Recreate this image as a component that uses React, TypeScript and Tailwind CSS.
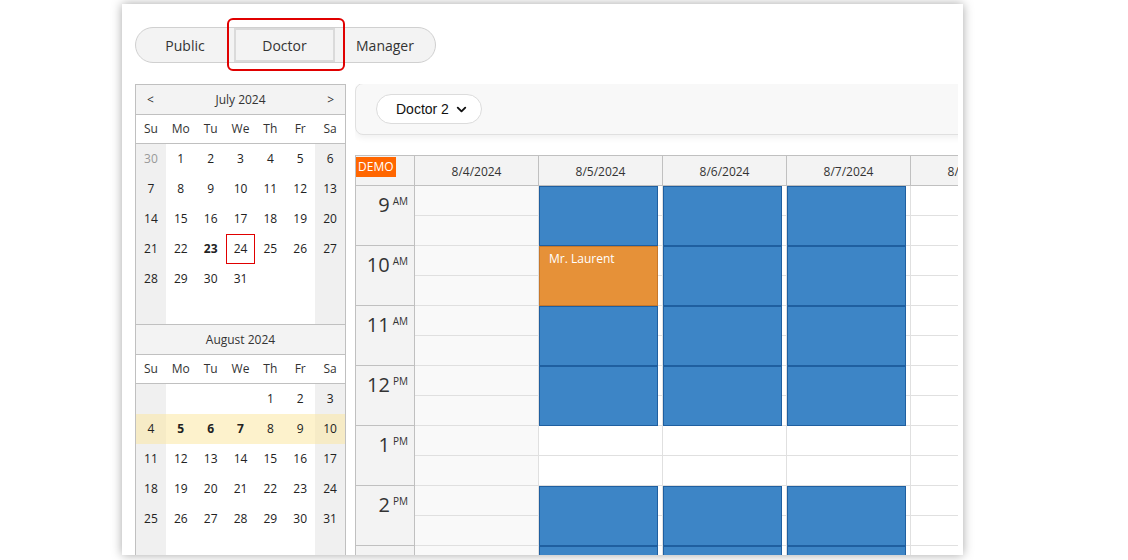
import React from 'react';
import { ChevronDown } from 'lucide-react';

const font = { fontFamily: '"Open Sans", "Noto Sans", sans-serif' };

type MonthDef = {
  title: string;
  nav?: boolean;
  rows: (number | null)[][];
  prevDays?: number[]; // values in first row that belong to previous month
  bold?: number[];
  today?: number;
  highlightRow?: number;
};

const july: MonthDef = {
  title: 'July 2024',
  nav: true,
  rows: [
    [30, 1, 2, 3, 4, 5, 6],
    [7, 8, 9, 10, 11, 12, 13],
    [14, 15, 16, 17, 18, 19, 20],
    [21, 22, 23, 24, 25, 26, 27],
    [28, 29, 30, 31, null, null, null],
    [null, null, null, null, null, null, null],
  ],
  prevDays: [30],
  bold: [23],
  today: 24,
};

const august: MonthDef = {
  title: 'August 2024',
  rows: [
    [null, null, null, null, 1, 2, 3],
    [4, 5, 6, 7, 8, 9, 10],
    [11, 12, 13, 14, 15, 16, 17],
    [18, 19, 20, 21, 22, 23, 24],
    [25, 26, 27, 28, 29, 30, 31],
    [null, null, null, null, null, null, null],
  ],
  bold: [5, 6, 7],
  highlightRow: 1,
};

const dayNames = ['Su', 'Mo', 'Tu', 'We', 'Th', 'Fr', 'Sa'];

const Month: React.FC<{ m: MonthDef }> = ({ m }) => (
  <div className="border-t border-[#c0c0c0]">
    <div className="h-[30px] bg-[#f3f3f3] flex items-center justify-between px-[11px] text-[12px] text-[#333] border-b border-[#c0c0c0]">
      <span className="w-[8px]">{m.nav ? '<' : ''}</span>
      <span>{m.title}</span>
      <span className="w-[8px] text-right">{m.nav ? '>' : ''}</span>
    </div>
    <div className="grid grid-cols-7 h-[29px] items-center text-[12px] text-[#333] bg-white border-b border-[#c0c0c0]">
      {dayNames.map(d => (
        <div key={d} className="text-center">{d}</div>
      ))}
    </div>
    {m.rows.map((row, ri) => (
      <div key={ri} className="grid grid-cols-7">
        {row.map((d, ci) => {
          const weekend = ci === 0 || ci === 6;
          const hl = m.highlightRow === ri;
          const bg = hl
            ? weekend ? 'bg-[#f6ebc6]' : 'bg-[#fdf2cc]'
            : weekend ? 'bg-[#f0f0f0]' : 'bg-white';
          const prev = ri === 0 && d !== null && m.prevDays?.includes(d);
          const isBold = d !== null && !prev && m.bold?.includes(d);
          const isToday = d !== null && d === m.today;
          return (
            <div
              key={ci}
              className={`h-[30px] flex items-center justify-center text-[12px] ${bg} ${prev ? 'text-[#999]' : 'text-[#222]'} ${isBold ? 'font-bold' : ''} ${isToday ? 'border border-[#e00000]' : ''}`}
            >
              {d ?? ''}
            </div>
          );
        })}
      </div>
    ))}
  </div>
);

const days = ['8/4/2024', '8/5/2024', '8/6/2024', '8/7/2024', '8/8/2024'];
const hours = [
  { h: '9', p: 'AM' },
  { h: '10', p: 'AM' },
  { h: '11', p: 'AM' },
  { h: '12', p: 'PM' },
  { h: '1', p: 'PM' },
  { h: '2', p: 'PM' },
  { h: '', p: '' },
];

type Ev = { slot: number; text?: string; orange?: boolean };
const events: Record<number, Ev[]> = {
  1: [{ slot: 0 }, { slot: 1, text: 'Mr. Laurent', orange: true }, { slot: 2 }, { slot: 3 }, { slot: 5 }, { slot: 6 }],
  2: [{ slot: 0 }, { slot: 1 }, { slot: 2 }, { slot: 3 }, { slot: 5 }, { slot: 6 }],
  3: [{ slot: 0 }, { slot: 1 }, { slot: 2 }, { slot: 3 }, { slot: 5 }, { slot: 6 }],
};

const Scheduler: React.FC = () => (
  <div className="border-l border-t border-[#c0c0c0] w-max">
    {/* header */}
    <div className="flex h-[30px] border-b border-[#c0c0c0] bg-[#f3f3f3]">
      <div className="w-[59px] border-r border-[#c0c0c0] relative">
        <span className="absolute left-[0px] top-[1px] bg-[#ff6600] text-white text-[12px] leading-[20px] px-[2px]">DEMO</span>
      </div>
      {days.map(d => (
        <div key={d} className="w-[124px] border-r border-[#c0c0c0] flex items-center justify-center pt-[2px] text-[12px] text-[#333]">
          {d}
        </div>
      ))}
    </div>
    {/* body */}
    <div className="flex">
      <div className="w-[59px] border-r border-[#c0c0c0] bg-[#f3f3f3]">
        {hours.map((h, i) => (
          <div key={i} className="h-[60px] border-b border-[#c0c0c0] flex justify-end items-start pr-[6px] pt-[9px] text-[#333]">
            <span className="text-[20px] leading-none">{h.h}</span>
            <span className="text-[10px] leading-none ml-[3px] mt-[1px]">{h.p}</span>
          </div>
        ))}
      </div>
      {days.map((d, di) => (
        <div key={d} className={`w-[124px] border-r border-[#e0e0e0] relative ${di === 0 ? 'bg-[#f9f9f9]' : 'bg-white'}`}>
          {hours.flatMap((h, i) => [0, 1].map(k => (
            <div key={i * 2 + k} className="h-[30px] border-b border-[#e0e0e0]" />
          )))}
          {(events[di] || []).map(ev => (
            <div
              key={ev.slot}
              className={`absolute left-0 right-[4px] h-[60px] border ${ev.orange ? 'bg-[#e69138] border-[#c8782a]' : 'bg-[#3d85c6] border-[#1f5fa0]'} text-white text-[12px] px-[9px] pt-[3px]`}
              style={{ top: ev.slot * 60 }}
            >
              {ev.text}
            </div>
          ))}
        </div>
      ))}
    </div>
  </div>
);

export default function App() {
  return (
    <div className="w-[1128px] h-[560px] bg-white overflow-hidden" style={font}>
      <div className="ml-[122px] mt-[4px] w-[841px] h-[551px] bg-white shadow-[0_0_10px_rgba(0,0,0,0.35)] overflow-hidden pl-[13px] pr-[5px] pt-[23px]">
        {/* tabs */}
        <div className="flex h-[36px] w-[301px] rounded-full border border-[#d0d0d0] bg-[#f3f3f3] text-[14px] text-[#333]">
          <div className="w-[98px] flex items-center justify-center">Public</div>
          <div className="w-[101px] relative flex items-center justify-center border-x-2 border-y-2 border-[#dadada]">
            Doctor
            <div className="absolute left-[-9px] top-[-12px] w-[118px] h-[53px] border-2 border-[#e00000] rounded-[6px]" />
          </div>
          <div className="flex-1 flex items-center justify-center">Manager</div>
        </div>

        <div className="flex gap-[9px] mt-[21px]">
          <div className="w-[211px] shrink-0 border-x border-[#c0c0c0]">
            <Month m={july} />
            <Month m={august} />
          </div>

          <div className="flex-1 min-w-0 overflow-hidden">
            <div className="h-[52px] w-[640px] bg-[#f8f8f8] border border-[#e0e0e0] rounded-[8px] shadow-[0_3px_6px_rgba(0,0,0,0.06)] flex items-center pl-[20px] -mt-[1px]">
              <div className="h-[30px] w-[106px] bg-white border border-[#dcdcdc] rounded-full flex items-center pl-[19px] pr-[12px] justify-between text-[14px] text-[#111]" style={{ fontFamily: '"Liberation Sans", Arial, sans-serif' }}>
                <span>Doctor 2</span>
                <ChevronDown size={15} strokeWidth={3} className="text-[#111]" />
              </div>
            </div>
            <div className="mt-[20px]">
              <Scheduler />
            </div>
          </div>
        </div>
      </div>
    </div>
  );
}
